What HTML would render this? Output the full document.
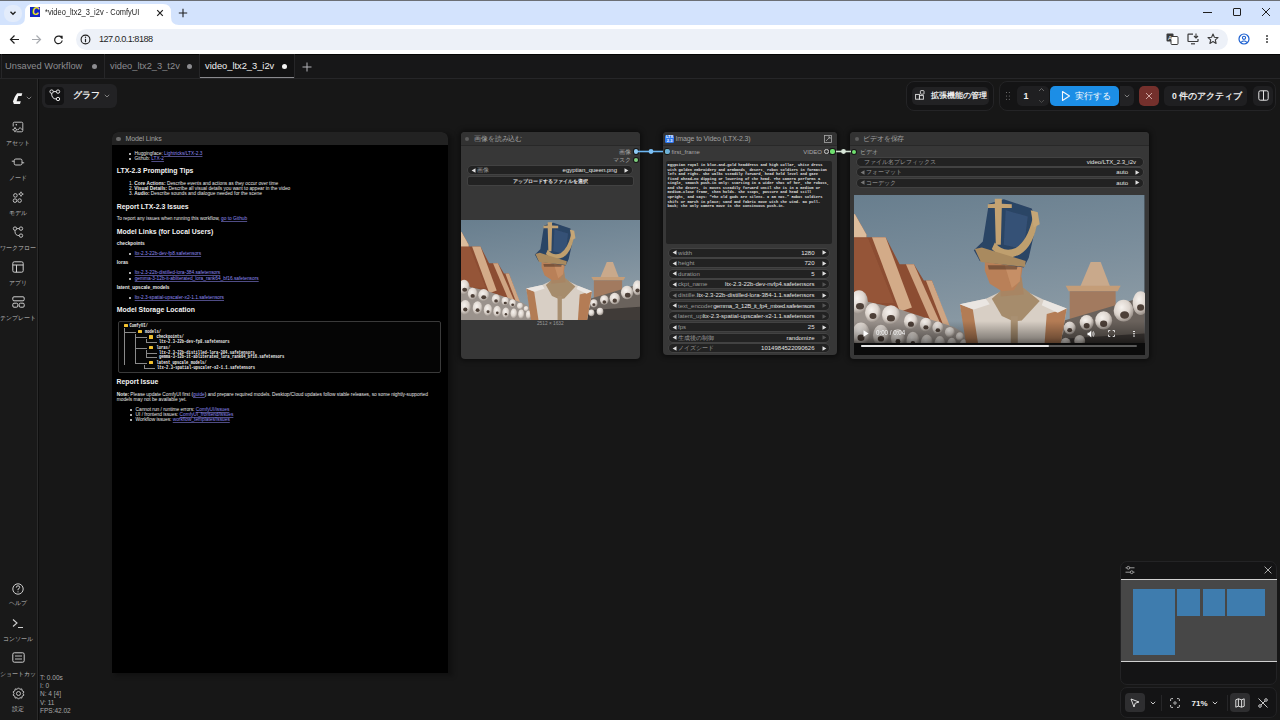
<!DOCTYPE html>
<html><head><meta charset="utf-8">
<style>
*{box-sizing:border-box;margin:0;padding:0}
html,body{width:1280px;height:720px;overflow:hidden;background:#171717;font-family:"Liberation Sans",sans-serif;position:relative}
.a{position:absolute;white-space:nowrap}
svg{display:block;overflow:visible}
.wt{font-size:9.3px;line-height:12px}
.sbl{left:0;width:36px;text-align:center;color:#bdbdbd;font-size:6.3px;line-height:10px;overflow:hidden}
.ntitle{font-size:7px;line-height:11px;color:#a0a0a0;letter-spacing:-0.12px}
.md{font-size:4.8px;line-height:6px;color:#e8e8e8;transform:translateY(-3px)}
.md b{font-weight:bold}
.lk{color:#8f8bf2;text-decoration:underline;text-decoration-thickness:0.4px;text-decoration-color:rgba(143,139,242,.55)}
.h2{font-size:6.9px;line-height:8px;font-weight:bold;color:#f2f2f2;transform:translateY(-4px)}
.code{font-family:"Liberation Mono",monospace;font-size:3.8px;line-height:6px;color:#f2f2f2;font-weight:bold;transform:translateY(-3px) scaleY(1.25)}
.wl{font-size:6px;line-height:8px;color:#9a9a9a}
.wv{font-size:6px;line-height:8px;color:#e2e2e2}
.wb{font-size:5.6px;line-height:8px;color:#e2e2e2;font-weight:bold}
.prompt{font-family:"Liberation Mono",monospace;font-size:3.7px;line-height:4.57px;color:#e0e0e0;font-weight:bold}
</style></head><body>
<!-- browser chrome -->
<div class="a" style="left:0;top:0;width:1280px;height:25px;background:#d3e3fd"></div>
<div class="a" style="left:0;top:0;width:1280px;height:1px;background:#6b6f75"></div>
<div class="a" style="left:4px;top:5px;width:18px;height:17px;border-radius:8px;background:#e3ecfb"></div>
<svg class="a" style="left:9px;top:9px" width="8" height="8" viewBox="0 0 8 8"><path d="M1.5 2.8 L4 5.2 L6.5 2.8" stroke="#1f1f1f" stroke-width="1.4" fill="none"/></svg>
<!-- active tab -->
<svg class="a" style="left:17px;top:4px" width="162" height="21" viewBox="0 0 162 21"><path d="M0 21 Q8 21 8 13 L8 8 Q8 0 16 0 L146 0 Q154 0 154 8 L154 13 Q154 21 162 21 Z" fill="#fff"/></svg>
<div class="a" style="left:30px;top:7px;width:10px;height:10px;background:#1326c4"></div>
<div class="a" style="left:31px;top:6px;width:9px;height:12px;color:#f4e21a;font-weight:bold;font-style:italic;font-size:10px;line-height:12px;text-align:center">C</div>
<div class="a" style="left:45px;top:6px;font-size:8.8px;line-height:12px;color:#1f1f1f;transform:scaleX(0.85);transform-origin:0 0">*video_ltx2_3_i2v - ComfyUI</div>
<svg class="a" style="left:156px;top:9px" width="8" height="8" viewBox="0 0 8 8"><path d="M1.2 1.2 L6.8 6.8 M6.8 1.2 L1.2 6.8" stroke="#1f1f1f" stroke-width="1.2"/></svg>
<svg class="a" style="left:178px;top:8px" width="10" height="10" viewBox="0 0 10 10"><path d="M5 0.8 V9.2 M0.8 5 H9.2" stroke="#1f1f1f" stroke-width="1.1"/></svg>
<!-- window controls -->
<div class="a" style="left:1203px;top:12px;width:9px;height:1px;background:#1f1f1f"></div>
<div class="a" style="left:1233px;top:8px;width:8px;height:8px;border:1px solid #1f1f1f;border-radius:1px"></div>
<svg class="a" style="left:1261px;top:7px" width="10" height="10" viewBox="0 0 10 10"><path d="M1 1 L9 9 M9 1 L1 9" stroke="#1f1f1f" stroke-width="1"/></svg>
<!-- toolbar -->
<div class="a" style="left:0;top:25px;width:1280px;height:29px;background:#fff"></div>
<svg class="a" style="left:9px;top:34px" width="11" height="11" viewBox="0 0 11 11"><path d="M10 5.5 H1.5 M5.5 1.5 L1.5 5.5 L5.5 9.5" stroke="#1f1f1f" stroke-width="1.2" fill="none"/></svg>
<svg class="a" style="left:31px;top:34px" width="11" height="11" viewBox="0 0 11 11"><path d="M1 5.5 H9.5 M5.5 1.5 L9.5 5.5 L5.5 9.5" stroke="#a8abb0" stroke-width="1.2" fill="none"/></svg>
<svg class="a" style="left:53px;top:34px" width="11" height="11" viewBox="0 0 11 11"><path d="M9 4.5 A3.8 3.8 0 1 0 9.2 6.5" stroke="#1f1f1f" stroke-width="1.2" fill="none"/><path d="M6.5 1.8 L9.6 1.8 L9.6 5 Z" fill="#1f1f1f"/></svg>
<div class="a" style="left:76px;top:29px;width:1152px;height:21px;border-radius:11px;background:#edf1f8"></div>
<svg class="a" style="left:80px;top:34px" width="11" height="11" viewBox="0 0 11 11"><circle cx="5.5" cy="5.5" r="4.4" stroke="#1f1f1f" stroke-width="1.1" fill="none"/><path d="M5.5 4.8 V8.2" stroke="#1f1f1f" stroke-width="1.2"/><circle cx="5.5" cy="3.2" r="0.7" fill="#1f1f1f"/></svg>
<div class="a" style="left:99px;top:33px;font-size:9.2px;line-height:12px;color:#1f1f1f;letter-spacing:-0.55px">127.0.0.1:8188</div>
<!-- right toolbar icons -->
<svg class="a" style="left:1166px;top:33px" width="13" height="12" viewBox="0 0 13 12"><rect x="0.5" y="0.5" width="7" height="8" rx="1" fill="#3b3b3b"/><rect x="5" y="3.5" width="7" height="8" rx="1" fill="#fff" stroke="#3b3b3b"/><text x="2" y="7" font-size="6" fill="#fff" font-family="Liberation Sans">A</text></svg>
<svg class="a" style="left:1187px;top:33px" width="13" height="12" viewBox="0 0 13 12"><path d="M6 1.2 H1.5 Q1 1.2 1 1.7 V8 Q1 8.5 1.5 8.5 H10.5 Q11 8.5 11 8 V6" stroke="#3b3b3b" stroke-width="1.2" fill="none"/><path d="M4 10.8 H8" stroke="#3b3b3b" stroke-width="1.2"/><path d="M9 0.5 V4.8 M7 3 L9 5 L11 3" stroke="#3b3b3b" stroke-width="1.1" fill="none"/></svg>
<svg class="a" style="left:1207px;top:33px" width="12" height="12" viewBox="0 0 12 12"><path d="M6 1 L7.4 4.3 L11 4.6 L8.3 6.9 L9.1 10.4 L6 8.6 L2.9 10.4 L3.7 6.9 L1 4.6 L4.6 4.3 Z" stroke="#3b3b3b" stroke-width="1.1" fill="none" stroke-linejoin="round"/></svg>
<svg class="a" style="left:1238px;top:33px" width="12" height="12" viewBox="0 0 12 12"><circle cx="6" cy="6" r="5" stroke="#1a5fd0" stroke-width="1.2" fill="none"/><circle cx="6" cy="4.8" r="1.6" stroke="#1a5fd0" stroke-width="1.1" fill="none"/><path d="M3 9.3 Q6 6.8 9 9.3" stroke="#1a5fd0" stroke-width="1.1" fill="none"/></svg>
<div class="a" style="left:1266px;top:35px;width:2px;height:2px;border-radius:1px;background:#3b3b3b;box-shadow:0 3px 0 #3b3b3b,0 6px 0 #3b3b3b"></div>
<!-- comfy workflow tabs -->
<div class="a" style="left:0;top:54px;width:1280px;height:25px;background:#171718"></div><div class="a" style="left:0;top:54px;width:1280px;height:1.3px;background:#050505"></div>
<div class="a" style="left:0;top:78px;width:1280px;height:1px;background:#262628"></div>
<div class="a" style="left:1px;top:54px;width:1px;height:24px;background:#262628"></div>
<div class="a" style="left:104px;top:54px;width:1px;height:24px;background:#262628"></div>
<div class="a" style="left:199px;top:54px;width:1px;height:24px;background:#262628"></div>
<div class="a" style="left:294px;top:54px;width:1px;height:24px;background:#262628"></div>
<div class="a" style="left:200px;top:54px;width:94px;height:24px;background:#121213"></div>
<div class="a" style="left:200px;top:76.5px;width:94px;height:1.5px;background:#8a8a8e"></div>
<div class="a wt" style="left:5px;top:60px;color:#8c8c90">Unsaved Workflow</div>
<div class="a" style="left:92px;top:64px;width:5px;height:5px;border-radius:50%;background:#8c8c90"></div>
<div class="a wt" style="left:110px;top:60px;color:#8c8c90">video_ltx2_3_t2v</div>
<div class="a" style="left:187px;top:64px;width:5px;height:5px;border-radius:50%;background:#8c8c90"></div>
<div class="a wt" style="left:205px;top:60px;color:#f0f0f0">video_ltx2_3_i2v</div>
<div class="a" style="left:282px;top:64px;width:5px;height:5px;border-radius:50%;background:#f4f4f4"></div>
<svg class="a" style="left:301.5px;top:61.5px" width="10" height="10" viewBox="0 0 10 10"><path d="M5 0.5 V9.5 M0.5 5 H9.5" stroke="#b4b4b8" stroke-width="1"/></svg>
<!-- sidebar -->
<div class="a" style="left:0;top:79px;width:36.5px;height:641px;background:#191919"></div>
<div class="a" style="left:36.5px;top:79px;width:1px;height:641px;background:#2b2b2b"></div>
<div class="a" style="left:37.5px;top:79px;width:1px;height:641px;background:#0e0e0e"></div>
<!-- logo -->
<svg class="a" style="left:12px;top:92px" width="12" height="13" viewBox="0 0 12 13"><path d="M5.2 1.2 L10.3 1.2 L9.5 3.9 L6.3 3.9 L4.6 9.3 L8.8 9.3 L8 11.9 L1.8 11.9 L1.3 10.2 L0.9 9.6 L2.6 5.2 L3.6 3.6 Z" fill="#f2f2f2"/></svg>
<svg class="a" style="left:25.5px;top:96px" width="6" height="4" viewBox="0 0 6 4"><path d="M0.8 0.8 L3 3 L5.2 0.8" stroke="#8a8a8a" stroke-width="0.9" fill="none"/></svg>
<!-- graph button -->
<div class="a" style="left:42px;top:83.5px;width:74.5px;height:24.5px;border-radius:6px;background:#222224"></div>
<div class="a" style="left:45px;top:86.5px;width:19px;height:18.5px;border-radius:4px;background:#131314"></div>
<svg class="a" style="left:48.5px;top:89px" width="12" height="13" viewBox="0 0 12 13"><circle cx="2.6" cy="2.6" r="1.7" stroke="#e6e6e6" stroke-width="1" fill="none"/><circle cx="9" cy="2.6" r="1.7" stroke="#e6e6e6" stroke-width="1" fill="none"/><circle cx="9" cy="10" r="1.7" stroke="#e6e6e6" stroke-width="1" fill="none"/><path d="M4.3 2.6 H7.3 M2.6 4.3 Q2.6 10 7.3 10" stroke="#e6e6e6" stroke-width="1" fill="none"/></svg>
<div class="a" style="left:73px;top:90px;font-size:9px;line-height:11px;font-weight:bold;color:#f0f0f0">グラフ</div>
<svg class="a" style="left:104px;top:94px" width="6" height="4" viewBox="0 0 6 4"><path d="M0.8 0.8 L3 3 L5.2 0.8" stroke="#8a8a8a" stroke-width="0.9" fill="none"/></svg>
<!-- right toolbar -->
<div class="a" style="left:905.5px;top:81px;width:88.5px;height:30px;border-radius:8px;background:#141415;border:1px solid #242426"></div>
<div class="a" style="left:911.5px;top:86.5px;width:77.5px;height:18.5px;border-radius:5px;background:#222224"></div>
<svg class="a" style="left:915px;top:90px" width="10" height="10" viewBox="0 0 10 10"><rect x="0.6" y="4.4" width="3.8" height="4.8" stroke="#e0e0e0" stroke-width="0.9" fill="none"/><rect x="4.4" y="5.6" width="4" height="3.6" stroke="#e0e0e0" stroke-width="0.9" fill="none"/><rect x="5.4" y="0.6" width="3.6" height="3.6" rx="0.6" stroke="#e0e0e0" stroke-width="0.9" fill="none"/></svg>
<div class="a" style="left:930.5px;top:89.5px;font-size:7.5px;line-height:12px;font-weight:bold;color:#ececec">拡張機能の管理</div>
<div class="a" style="left:998.5px;top:81px;width:277px;height:30px;border-radius:8px;background:#141415;border:1px solid #242426"></div>
<div class="a" style="left:1005.5px;top:91.5px;width:1.3px;height:1.3px;border-radius:50%;background:#888;box-shadow:2.8px 0 #888,0 3.4px #888,2.8px 3.4px #888,0 6.8px #888,2.8px 6.8px #888"></div>
<div class="a" style="left:1016.5px;top:86px;width:32px;height:19.5px;border-radius:5px;background:#1f1f21"></div>
<div class="a" style="left:1023.5px;top:90px;font-size:9px;line-height:12px;font-weight:bold;color:#eee">1</div>
<svg class="a" style="left:1038px;top:87px" width="7" height="17" viewBox="0 0 7 17"><path d="M1 4 L3.5 1.5 L6 4" stroke="#777" stroke-width="0.8" fill="none"/><path d="M1 13 L3.5 15.5 L6 13" stroke="#555" stroke-width="0.8" fill="none"/></svg>
<div class="a" style="left:1050.3px;top:86px;width:68.5px;height:20px;border-radius:5px;background:#1c8ee6"></div>
<svg class="a" style="left:1061px;top:90px" width="10" height="12" viewBox="0 0 10 12"><path d="M1.5 1.5 L8.5 6 L1.5 10.5 Z" stroke="#f4f8fc" stroke-width="1.1" fill="none" stroke-linejoin="round"/></svg>
<div class="a" style="left:1075px;top:90px;font-size:8.5px;line-height:12px;color:#f4f8fc">実行する</div>
<div class="a" style="left:1119.7px;top:86px;width:14px;height:20px;border-radius:0 5px 5px 0;background:#222224"></div>
<svg class="a" style="left:1123.5px;top:94px" width="6" height="4" viewBox="0 0 6 4"><path d="M0.8 0.8 L3 3 L5.2 0.8" stroke="#888" stroke-width="0.9" fill="none"/></svg>
<div class="a" style="left:1139px;top:86px;width:20px;height:20px;border-radius:5px;background:#74302c"></div>
<svg class="a" style="left:1145px;top:92px" width="8" height="8" viewBox="0 0 8 8"><path d="M1 1 L7 7 M7 1 L1 7" stroke="#d9b3b0" stroke-width="0.9"/></svg>
<div class="a" style="left:1164px;top:86px;width:83px;height:20px;border-radius:5px;background:#1f1f21"></div>
<div class="a" style="left:1172px;top:90px;font-size:8.6px;line-height:12px;font-weight:bold;color:#eee">0 件のアクティブ</div>
<div class="a" style="left:1253px;top:86px;width:19.5px;height:20px;border-radius:5px;background:#1f1f21"></div>
<svg class="a" style="left:1257.5px;top:90px" width="11" height="11" viewBox="0 0 11 11"><rect x="0.8" y="0.8" width="9.4" height="9.4" rx="1.5" stroke="#e6e6e6" stroke-width="1" fill="none"/><path d="M5.5 0.8 V10.2" stroke="#e6e6e6" stroke-width="1"/></svg>
<!-- sidebar icons -->
<svg class="a" style="left:12px;top:121px" width="12" height="12" viewBox="0 0 12 12"><path d="M4.5 10.8 H9.5 Q10.8 10.8 10.8 9.5 V2.5 Q10.8 1.2 9.5 1.2 H2.5 Q1.2 1.2 1.2 2.5 V5.5" stroke="#cfcfcf" stroke-width="0.9" fill="none"/><path d="M3 6.3 L3.7 8 L5.4 8.7 L3.7 9.4 L3 11.1 L2.3 9.4 L0.6 8.7 L2.3 8 Z" stroke="#cfcfcf" stroke-width="0.8" fill="none" stroke-linejoin="round"/><path d="M6 9 L8 6.5 L10.5 9" stroke="#cfcfcf" stroke-width="0.8" fill="none"/><circle cx="4.3" cy="3.8" r="0.8" fill="#cfcfcf"/></svg>
<div class="a sbl" style="top:138px">アセット</div>
<svg class="a" style="left:11px;top:157px" width="14" height="10" viewBox="0 0 14 10"><rect x="3.2" y="2" width="7.8" height="6" rx="1.6" stroke="#cfcfcf" stroke-width="0.95" fill="none"/><path d="M0.8 4.2 H3.2 M11 5.8 H13.2" stroke="#cfcfcf" stroke-width="0.95"/></svg>
<div class="a sbl" style="top:173px">ノード</div>
<svg class="a" style="left:12px;top:191px" width="12" height="12" viewBox="0 0 12 12"><circle cx="3.4" cy="4.4" r="1.8" stroke="#cfcfcf" stroke-width="0.9" fill="none"/><circle cx="3" cy="9.6" r="1.8" stroke="#cfcfcf" stroke-width="0.9" fill="none"/><circle cx="7.6" cy="9.6" r="1.8" stroke="#cfcfcf" stroke-width="0.9" fill="none"/><path d="M9 0.8 L9.7 2.4 L11.3 3.1 L9.7 3.8 L9 5.4 L8.3 3.8 L6.7 3.1 L8.3 2.4 Z" stroke="#cfcfcf" stroke-width="0.8" fill="none" stroke-linejoin="round"/></svg>
<div class="a sbl" style="top:208px">モデル</div>
<svg class="a" style="left:12px;top:226px" width="12" height="13" viewBox="0 0 12 13"><circle cx="3" cy="2.6" r="1.7" stroke="#cfcfcf" stroke-width="0.9" fill="none"/><circle cx="9" cy="2.6" r="1.7" stroke="#cfcfcf" stroke-width="0.9" fill="none"/><circle cx="9" cy="9.6" r="1.7" stroke="#cfcfcf" stroke-width="0.9" fill="none"/><path d="M4.7 2.6 H7.3 M3 4.3 V5.5 Q3 9.6 7.3 9.6" stroke="#cfcfcf" stroke-width="0.9" fill="none"/></svg>
<div class="a sbl" style="top:243px">ワークフロー</div>
<svg class="a" style="left:12px;top:261px" width="12" height="12" viewBox="0 0 12 12"><rect x="0.8" y="0.8" width="10.4" height="10.4" rx="1.5" stroke="#cfcfcf" stroke-width="1" fill="none"/><path d="M0.8 4 H11.2 M4.5 4 V11.2" stroke="#cfcfcf" stroke-width="1"/></svg>
<div class="a sbl" style="top:278px">アプリ</div>
<svg class="a" style="left:11.5px;top:296px" width="13" height="12" viewBox="0 0 13 12"><rect x="0.8" y="0.8" width="11.4" height="4" rx="1.2" stroke="#cfcfcf" stroke-width="1" fill="none"/><rect x="0.8" y="7.2" width="5" height="4" rx="1.2" stroke="#cfcfcf" stroke-width="1" fill="none"/><rect x="7.2" y="7.2" width="5" height="4" rx="1.2" stroke="#cfcfcf" stroke-width="1" fill="none"/></svg>
<div class="a sbl" style="top:313px">テンプレート</div>
<svg class="a" style="left:12px;top:583px" width="12" height="12" viewBox="0 0 12 12"><circle cx="6" cy="6" r="5.2" stroke="#cfcfcf" stroke-width="1" fill="none"/><path d="M4.3 4.6 Q4.3 2.8 6 2.8 Q7.7 2.8 7.7 4.4 Q7.7 5.5 6 6.2 V7.2" stroke="#cfcfcf" stroke-width="1" fill="none"/><circle cx="6" cy="8.8" r="0.6" fill="#cfcfcf"/></svg>
<div class="a sbl" style="top:598px">ヘルプ</div>
<svg class="a" style="left:12px;top:618px" width="12" height="11" viewBox="0 0 12 11"><path d="M1 1.5 L5 5 L1 8.5 M6 9.5 H11" stroke="#cfcfcf" stroke-width="1.1" fill="none"/></svg>
<div class="a sbl" style="top:634px">コンソール</div>
<svg class="a" style="left:11.5px;top:652px" width="13" height="11" viewBox="0 0 13 11"><rect x="0.8" y="0.8" width="11.4" height="9.4" rx="1.5" stroke="#cfcfcf" stroke-width="1" fill="none"/><path d="M3 4 H10 M3 7 H10" stroke="#cfcfcf" stroke-width="0.9"/></svg>
<div class="a sbl" style="top:669px">ショートカット</div>
<svg class="a" style="left:11.5px;top:686.5px" width="13" height="13" viewBox="0 0 13 13"><path d="M6.5 0.8 L7.8 2.3 L9.8 1.9 L10.2 3.9 L12 4.9 L11 6.5 L12 8.1 L10.2 9.1 L9.8 11.1 L7.8 10.7 L6.5 12.2 L5.2 10.7 L3.2 11.1 L2.8 9.1 L1 8.1 L2 6.5 L1 4.9 L2.8 3.9 L3.2 1.9 L5.2 2.3 Z" stroke="#cfcfcf" stroke-width="0.9" fill="none" stroke-linejoin="round"/><circle cx="6.5" cy="6.5" r="2" stroke="#cfcfcf" stroke-width="0.9" fill="none"/></svg>
<div class="a sbl" style="top:704px">設定</div>
<!-- stats -->
<div class="a" style="left:40px;top:674px;font-size:6.5px;line-height:8.2px;color:#a8a8a8">T: 0.00s<br>I: 0<br>N: 4 [4]<br>V: 11<br>FPS:42.02</div>
<div class="a" style="left:112px;top:132px;width:336px;height:541px;border-radius:6px 6px 0 0;background:#000;box-shadow:4px 2px 5px 1px rgba(0,0,0,.3)"></div>
<div class="a" style="left:112px;top:132px;width:336px;height:13px;border-radius:6px 6px 0 0;background:#222222"></div>
<div class="a" style="left:116.3px;top:136.5px;width:4.5px;height:4.5px;border-radius:50%;background:#6a6a6a"></div>
<div class="a ntitle" style="left:125.5px;top:133px">Model Links</div>
<div class="a" style="left:128.6px;top:152.8px;width:2px;height:2px;border-radius:50%;background:#e6e6e6"></div>
<div class="a md" style="left:134.5px;top:153.8px;">Huggingface: <span class="lk">Lightricks/LTX-2.3</span></div>
<div class="a" style="left:128.6px;top:157.6px;width:2px;height:2px;border-radius:50%;background:#e6e6e6"></div>
<div class="a md" style="left:134.5px;top:158.6px;">Github: <span class="lk">LTX-2</span></div>
<div class="a h2" style="left:116.75px;top:171.4px;">LTX-2.3 Prompting Tips</div>
<div class="a md" style="left:129px;top:183.8px;">1. <b>Core Actions:</b> Describe events and actions as they occur over time</div>
<div class="a md" style="left:129px;top:188.8px;">2. <b>Visual Details:</b> Describe all visual details you want to appear in the video</div>
<div class="a md" style="left:129px;top:194px;">3. <b>Audio:</b> Describe sounds and dialogue needed for the scene</div>
<div class="a h2" style="left:116.75px;top:206.6px;">Report LTX-2.3 Issues</div>
<div class="a md" style="left:116.75px;top:218.5px;">To report any issues when running this workflow, <span class="lk">go to Github</span></div>
<div class="a h2" style="left:116.75px;top:231.6px;">Model Links (for Local Users)</div>
<div class="a md" style="left:116.75px;top:243.6px;"><b>checkpoints</b></div>
<div class="a" style="left:128.6px;top:253px;width:2px;height:2px;border-radius:50%;background:#e6e6e6"></div>
<div class="a md" style="left:134.7px;top:254px;"><span class="lk">ltx-2.3-22b-dev-fp8.safetensors</span></div>
<div class="a md" style="left:116.75px;top:263.3px;"><b>loras</b></div>
<div class="a" style="left:128.6px;top:272px;width:2px;height:2px;border-radius:50%;background:#e6e6e6"></div>
<div class="a md" style="left:134.7px;top:273px;"><span class="lk">ltx-2.3-22b-distilled-lora-384.safetensors</span></div>
<div class="a" style="left:128.6px;top:277.7px;width:2px;height:2px;border-radius:50%;background:#e6e6e6"></div>
<div class="a md" style="left:134.7px;top:278.7px;"><span class="lk">gemma-3-12b-it-abliterated_lora_rank64_bf16.safetensors</span></div>
<div class="a md" style="left:116.75px;top:288.3px;"><b>latent_upscale_models</b></div>
<div class="a" style="left:128.6px;top:297.3px;width:2px;height:2px;border-radius:50%;background:#e6e6e6"></div>
<div class="a md" style="left:134.7px;top:298.3px;"><span class="lk">ltx-2.3-spatial-upscaler-x2-1.1.safetensors</span></div>
<div class="a h2" style="left:116.75px;top:310.3px;">Model Storage Location</div>
<div class="a" style="left:118.3px;top:320.6px;width:322.7px;height:52.2px;border:1px solid #3a3a3a;border-radius:2px;background:#050505"></div>
<div class="a code" style="left:129.5px;top:325.5px;">ComfyUI/</div>
<div class="a code" style="left:145px;top:331.5px;">models/</div>
<div class="a code" style="left:156.5px;top:337px;">checkpoints/</div>
<div class="a code" style="left:159px;top:342px;">ltx-2.3-22b-dev-fp8.safetensors</div>
<div class="a code" style="left:156.5px;top:347.5px;">loras/</div>
<div class="a code" style="left:159px;top:352.5px;">ltx-2.3-22b-distilled-lora-384.safetensors</div>
<div class="a code" style="left:159px;top:357.2px;">gemma-3-12b-it-abliterated_lora_rank64_bf16.safetensors</div>
<div class="a code" style="left:156.5px;top:362.5px;">latent_upscale_models/</div>
<div class="a code" style="left:157px;top:368px;">ltx-2.3-spatial-upscaler-x2-1.1.safetensors</div>
<div class="a" style="left:123.5px;top:323.9px;width:4px;height:3.2px;background:#f2c230;border-radius:0.5px"></div>
<div class="a" style="left:138px;top:329.9px;width:4px;height:3.2px;background:#f2c230;border-radius:0.5px"></div>
<div class="a" style="left:149px;top:335.4px;width:4px;height:3.2px;background:#f2c230;border-radius:0.5px"></div>
<div class="a" style="left:149px;top:345.9px;width:4px;height:3.2px;background:#f2c230;border-radius:0.5px"></div>
<div class="a" style="left:149px;top:360.9px;width:4px;height:3.2px;background:#f2c230;border-radius:0.5px"></div>
<div class="a" style="left:123.5px;top:327.5px;width:0.7px;height:37px;background:#8a8a8a"></div>
<div class="a" style="left:123.5px;top:331.5px;width:12px;height:0.7px;background:#8a8a8a"></div>
<div class="a" style="left:134.5px;top:333.5px;width:0.7px;height:29px;background:#8a8a8a"></div>
<div class="a" style="left:134.5px;top:337px;width:12px;height:0.7px;background:#8a8a8a"></div>
<div class="a" style="left:146px;top:339px;width:0.7px;height:3px;background:#8a8a8a"></div>
<div class="a" style="left:146px;top:342px;width:11px;height:0.7px;background:#8a8a8a"></div>
<div class="a" style="left:134.5px;top:347.5px;width:12px;height:0.7px;background:#8a8a8a"></div>
<div class="a" style="left:146px;top:349.5px;width:0.7px;height:8px;background:#8a8a8a"></div>
<div class="a" style="left:146px;top:352.5px;width:11px;height:0.7px;background:#8a8a8a"></div>
<div class="a" style="left:146px;top:357.2px;width:11px;height:0.7px;background:#8a8a8a"></div>
<div class="a" style="left:134.5px;top:362.5px;width:12px;height:0.7px;background:#8a8a8a"></div>
<div class="a" style="left:144px;top:364.5px;width:0.7px;height:3.5px;background:#8a8a8a"></div>
<div class="a" style="left:144px;top:368px;width:11px;height:0.7px;background:#8a8a8a"></div>
<div class="a h2" style="left:116.5px;top:382px;">Report Issue</div>
<div class="a md" style="left:116.75px;top:394.5px;"><b>Note:</b> Please update ComfyUI first (<span class="lk">guide</span>) and prepare required models. Desktop/Cloud updates follow stable releases, so some nightly-supported</div>
<div class="a md" style="left:116.75px;top:399.8px;">models may not be available yet.</div>
<div class="a" style="left:129.8px;top:409.2px;width:2px;height:2px;border-radius:50%;background:#e6e6e6"></div>
<div class="a md" style="left:135.5px;top:410.2px;">Cannot run / runtime errors: <span class="lk">ComfyUI/issues</span></div>
<div class="a" style="left:129.8px;top:414.2px;width:2px;height:2px;border-radius:50%;background:#e6e6e6"></div>
<div class="a md" style="left:135.5px;top:415.2px;">UI / frontend issues: <span class="lk">ComfyUI_frontend/issues</span></div>
<div class="a" style="left:129.8px;top:419.2px;width:2px;height:2px;border-radius:50%;background:#e6e6e6"></div>
<div class="a md" style="left:135.5px;top:420.2px;">Workflow issues: <span class="lk">workflow_templates/issues</span></div>
<div class="a" style="left:460.8px;top:132.3px;width:179px;height:226.7px;border-radius:4px;background:#373737;box-shadow:0 0 5px 2px rgba(0,0,0,.45)"></div>
<div class="a" style="left:460.8px;top:132.3px;width:179px;height:13px;border-radius:4px 4px 0 0;background:#323232"></div>
<div class="a" style="left:460.8px;top:145.3px;width:179px;height:0.7px;background:#282828"></div>
<div class="a" style="left:464.5px;top:136.6px;width:4.5px;height:4.5px;border-radius:50%;background:#5c5c5c"></div>
<div class="a ntitle" style="left:474px;top:133px">画像を読み込む</div>
<div class="a wl" style="right:649.5px;top:147.5px;color:#a8a8a8">画像</div>
<div class="a wl" style="right:649.5px;top:156.2px;color:#a8a8a8">マスク</div>
<div class="a" style="left:633.5px;top:149.4px;width:4.2px;height:4.2px;border-radius:50%;background:#8fcaf5;box-shadow:0 0 0 1px rgba(0,0,0,.6)"></div>
<div class="a" style="left:633.5px;top:158.1px;width:4.2px;height:4.2px;border-radius:50%;background:#7fd07f;box-shadow:0 0 0 1px rgba(0,0,0,.6)"></div>
<div class="a" style="left:467.5px;top:166.2px;width:164.5px;height:8px;border-radius:4.0px;background:#222222;box-shadow:0 0 0 0.7px #474747"></div>
<svg class="a" style="left:470.5px;top:167.7px" width="5" height="5" viewBox="0 0 5 5"><path d="M4.5 0.3 L0.6 2.5 L4.5 4.7 Z" fill="#dedede"/></svg>
<svg class="a" style="left:624.0px;top:167.7px" width="5" height="5" viewBox="0 0 5 5"><path d="M0.5 0.3 L4.4 2.5 L0.5 4.7 Z" fill="#dedede"/></svg>
<div class="a wl" style="left:476.5px;top:166.2px">画像</div>
<div class="a wv" style="right:663.0px;top:166.2px">egyptian_queen.png</div>
<div class="a" style="left:467.5px;top:177px;width:165px;height:7.6px;border-radius:1.5px;background:#222222;box-shadow:0 0 0 0.7px #474747"></div>
<div class="a wb" style="left:467.5px;width:165px;top:176.8px;text-align:center;font-size:5.1px">アップロードするファイルを選択</div>
<div class="a" style="left:460.8px;top:219.7px;width:179px;height:100.3px;overflow:hidden"><svg width="100%" height="100%" viewBox="0 0 291 148" preserveAspectRatio="none" style="display:block">
<defs>
<linearGradient id="skyi1" x1="0" y1="0" x2="0.25" y2="1"><stop offset="0" stop-color="#687e8e"/><stop offset="0.5" stop-color="#7a8d9b"/><stop offset="1" stop-color="#909ea7"/></linearGradient>
<linearGradient id="sandi1" x1="0" y1="0" x2="1" y2="0.3"><stop offset="0" stop-color="#b47b55"/><stop offset="1" stop-color="#c48d60"/></linearGradient>
<radialGradient id="ski1" cx="0.4" cy="0.35" r="0.65"><stop offset="0" stop-color="#f6f2ee"/><stop offset="0.6" stop-color="#ddd5ce"/><stop offset="1" stop-color="#9a918a"/></radialGradient>
<filter id="bli1" x="-5%" y="-5%" width="110%" height="110%"><feGaussianBlur stdDeviation="0.7"/></filter>
</defs>
<rect width="291" height="148" fill="url(#skyi1)"/>
<g filter="url(#bli1)">
<!-- left stepped pyramid -->
<path d="M-2 17 L1 17.7 L12.5 36.5 L12.5 39 L31.7 39 L45.7 64 L60 64 L70 79 L78 79 L98.4 129 L98.4 148 L-2 148 Z" fill="#8c4d32"/>
<path d="M-2 17 L1 17.7 L12.5 36.5 L12.5 39 L0 39 L-2 36 Z" fill="#dcbc9c"/>
<path d="M18 39 L31.7 39 L58 104 L46 108 Z" fill="#d3ab88"/>
<path d="M52 64 L60 64 L86 118 L78 119 Z" fill="#cfa583"/>
<path d="M72 79 L78 79 L98.4 127 L93 129 Z" fill="#cfa583"/>
<path d="M0 40 L14 40 L40 100 L0 100 Z" fill="#98583a" opacity=".7"/>
<!-- right tower -->
<path d="M237 62 L247 62 L257 86 L226 86 Z" fill="#c9a98b"/>
<path d="M212 84 L267 84 L264 89 L215 89 Z" fill="#c49d78"/>
<rect x="216" y="89" width="46" height="32" fill="#a27a5e"/>
<!-- left skulls -->
<path d="M0 96 L40 104 L100 122 L118 132 L118 148 L0 148 Z" fill="#9a928c"/>
<g fill="url(#ski1)">
<ellipse cx="5" cy="99" rx="9" ry="11"/><ellipse cx="19" cy="109" rx="8" ry="9"/><ellipse cx="37" cy="111" rx="9" ry="9"/>
<ellipse cx="57" cy="117" rx="7" ry="7.5"/><ellipse cx="72" cy="120" rx="6" ry="6.5"/><ellipse cx="84" cy="123" rx="5.5" ry="6"/><ellipse cx="96" cy="127" rx="5" ry="5"/><ellipse cx="106" cy="131" rx="4" ry="4"/>
<ellipse cx="7" cy="129" rx="9" ry="11"/><ellipse cx="27" cy="130" rx="8" ry="10"/><ellipse cx="44" cy="133" rx="7" ry="9"/><ellipse cx="59" cy="135" rx="6.5" ry="8.5"/><ellipse cx="73" cy="137" rx="6" ry="8"/><ellipse cx="86" cy="138" rx="5.5" ry="7.5"/><ellipse cx="98" cy="139" rx="5" ry="7"/><ellipse cx="110" cy="140" rx="4.5" ry="6.5"/>
</g>
<g fill="#4e4038">
<ellipse cx="6" cy="103" rx="4" ry="3"/><ellipse cx="19" cy="112" rx="3.5" ry="2.8"/><ellipse cx="37" cy="114" rx="4" ry="3"/><ellipse cx="57" cy="119.5" rx="3" ry="2.4"/><ellipse cx="72" cy="122.5" rx="2.6" ry="2"/><ellipse cx="84" cy="125" rx="2.3" ry="1.8"/>
<ellipse cx="7" cy="132" rx="3.5" ry="3"/><ellipse cx="27" cy="133" rx="3.2" ry="2.6"/><ellipse cx="44" cy="135.5" rx="2.5" ry="2.2"/><ellipse cx="59" cy="137" rx="2.2" ry="2"/><ellipse cx="73" cy="139" rx="2" ry="1.8"/>
</g>
<!-- right skulls -->
<path d="M196 120 L240 108 L291 94 L291 148 L196 148 Z" fill="#6a625c"/>
<path d="M196 134 L291 128 L291 148 L196 148 Z" fill="#3f3a37"/>
<g fill="url(#ski1)">
<ellipse cx="205" cy="126" rx="5" ry="5"/><ellipse cx="216" cy="123" rx="6" ry="6"/><ellipse cx="233" cy="118" rx="7" ry="7"/><ellipse cx="250" cy="116" rx="8.5" ry="8.5"/><ellipse cx="270" cy="107" rx="10" ry="10"/><ellipse cx="287" cy="100" rx="8" ry="11"/>
<ellipse cx="212" cy="137" rx="5" ry="5"/><ellipse cx="226" cy="135" rx="5.5" ry="5.5"/>
</g>
<g fill="#4e4038"><ellipse cx="233" cy="121" rx="3" ry="2.5"/><ellipse cx="250" cy="119" rx="3.6" ry="3"/><ellipse cx="271" cy="111" rx="4.5" ry="3.5"/><ellipse cx="287" cy="104" rx="3.5" ry="3"/><ellipse cx="216" cy="125" rx="2.5" ry="2"/></g>
<!-- dress -->
<path d="M106 101 L132 96 L150 88 L170 88 L190 97 L213 105 L205 148 L116 148 Z" fill="#d8cfc5"/>
<path d="M106 101 L119 106 L126 148 L114 148 Z" fill="#b27b55"/>
<path d="M193 110 L213 105 L205 148 L190 148 Z" fill="#b47c54"/>
<path d="M106 101 L132 96 L136 101 L120 106 Z" fill="#eae6e2"/>
<path d="M190 97 L213 105 L204 109 L188 102 Z" fill="#eae6e2"/>
<path d="M138 96 L150 86 L170 86 L186 98 L168 116 L160 117 L148 112 Z" fill="#a68c6c"/>
<rect x="157" y="112" width="7" height="36" fill="#a99072"/>
<!-- neck/face -->
<path d="M146 78 L168 76 L170 92 L147 94 Z" fill="#a88564"/>
<path d="M131 58 L170 60 L167 78 L160 88 L148 89 L136 82 L131 70 Z" fill="#b98058"/>
<path d="M150 62 L168 62 L166 80 L158 86 Z" fill="#cf9a70" opacity=".6"/>
<path d="M134 65 L164 65 L163 69 L135 69 Z" fill="#4a3224" opacity=".55"/>
<!-- crown -->
<path d="M135 8 L150 4 L178 12.5 L183 25 L175 58 L170 67 L126 61 L120 51 L129 43 Z" fill="#2c4465"/>
<path d="M152 14 L174 20 L170 50 L150 46 Z" fill="#38557a" opacity=".8"/>
<path d="M141 3.5 L148 3.5 L148 8 L158 8.5 L158 12 L148 12 L147 46 L142 46 L141 12 L134 12 L134 8.5 L141 8 Z" fill="#c3a272"/>
<path d="M141 44 Q150 54 162 49 Q174 42 179 21 L184 23 Q180 48 166 55 Q150 62 138 50 Z" fill="#bf9f6e"/>
<path d="M177 14 L184 16 L186 27 L180 30 Z" fill="#c6a676"/>
<path d="M121 50 L128 48.5 L172 61 L171 66.5 L127 62 Z" fill="#a98a5e"/>
</g>
</svg>
</div>
<div class="a" style="left:460.8px;top:320.5px;width:179px;text-align:center;font-size:4.8px;line-height:6px;color:#9a9a9a">2512 × 1632</div>
<div class="a" style="left:663px;top:132.3px;width:173.5px;height:222.7px;border-radius:4px;background:#373737;box-shadow:0 0 5px 2px rgba(0,0,0,.45)"></div>
<div class="a" style="left:663px;top:132.3px;width:173.5px;height:13px;border-radius:4px 4px 0 0;background:#323232"></div>
<div class="a" style="left:663px;top:145.3px;width:173.5px;height:0.7px;background:#282828"></div>
<div class="a" style="left:664.7px;top:134.6px;width:9.8px;height:8.6px;border-radius:1.5px;background:#2f78ee"></div>
<div class="a" style="left:665.5px;top:135px;width:8.2px;font-size:4px;line-height:4px;color:#fff;font-weight:bold;text-align:center">LTX<br>2.3</div>
<div class="a ntitle" style="left:675.5px;top:133px">Image to Video (LTX-2.3)</div>
<svg class="a" style="left:824px;top:134.5px" width="8" height="8" viewBox="0 0 8 8"><rect x="0.5" y="0.5" width="7" height="7" stroke="#aaa" stroke-width="0.8" fill="none"/><path d="M2 6 L6 2 M4 2 H6 V4" stroke="#aaa" stroke-width="0.8" fill="none"/></svg>
<div class="a" style="left:664.9px;top:149.4px;width:4.2px;height:4.2px;border-radius:50%;background:#7fd07f;box-shadow:0 0 0 1px rgba(0,0,0,.6)"></div>
<div class="a" style="left:665px;top:149.2px;width:4.6px;height:4.6px;border-radius:50%;background:#6dafd8"></div>
<div class="a wl" style="left:671.5px;top:147.5px;color:#a8a8a8">first_frame</div>
<div class="a wl" style="right:458px;top:147.5px;color:#a8a8a8">VIDEO</div>
<div class="a" style="left:824px;top:149.2px;width:4.6px;height:4.6px;border-radius:50%;border:0.8px solid #ccc"></div>
<div class="a" style="left:830.4px;top:149.4px;width:4.2px;height:4.2px;border-radius:50%;background:#6fe06f;box-shadow:0 0 0 1px rgba(0,0,0,.6)"></div>
<div class="a" style="left:666.3px;top:161.3px;width:166px;height:82.3px;border-radius:2px;background:#222222"></div>
<div class="a prompt" style="left:667.5px;top:163px">Egyptian royal in blue-and-gold headdress and high collar, white dress<br>with golden embroidery and armbands, desert, robot soldiers in formation<br>left and right. She walks steadily forward, head held level and gaze<br>fixed ahead—no dipping or lowering of the head. The camera performs a<br>single, smooth push-in only: starting in a wider shot of her, the robots,<br>and the desert, it moves steadily forward until she is in a medium or<br>medium-close frame, then holds. She stops, posture and head still<br>upright, and says: “The old gods are silent. I am not.” Robot soldiers<br>shift or march in place; sand and fabric move with the wind. No pull-<br>back; the only camera move is the continuous push-in.</div>
<div class="a" style="left:669.1px;top:248.6px;width:160.4px;height:8px;border-radius:4.0px;background:#222222;box-shadow:0 0 0 0.7px #474747"></div>
<svg class="a" style="left:672.1px;top:250.1px" width="5" height="5" viewBox="0 0 5 5"><path d="M4.5 0.3 L0.6 2.5 L4.5 4.7 Z" fill="#dedede"/></svg>
<svg class="a" style="left:821.5px;top:250.1px" width="5" height="5" viewBox="0 0 5 5"><path d="M0.5 0.3 L4.4 2.5 L0.5 4.7 Z" fill="#dedede"/></svg>
<div class="a wl" style="left:678.1px;top:248.6px">width</div>
<div class="a wv" style="right:465.5px;top:248.6px">1280</div>
<div class="a" style="left:669.1px;top:259.23px;width:160.4px;height:8px;border-radius:4.0px;background:#222222;box-shadow:0 0 0 0.7px #474747"></div>
<svg class="a" style="left:672.1px;top:260.73px" width="5" height="5" viewBox="0 0 5 5"><path d="M4.5 0.3 L0.6 2.5 L4.5 4.7 Z" fill="#dedede"/></svg>
<svg class="a" style="left:821.5px;top:260.73px" width="5" height="5" viewBox="0 0 5 5"><path d="M0.5 0.3 L4.4 2.5 L0.5 4.7 Z" fill="#dedede"/></svg>
<div class="a wl" style="left:678.1px;top:259.23px">height</div>
<div class="a wv" style="right:465.5px;top:259.23px">720</div>
<div class="a" style="left:669.1px;top:269.86px;width:160.4px;height:8px;border-radius:4.0px;background:#222222;box-shadow:0 0 0 0.7px #474747"></div>
<svg class="a" style="left:672.1px;top:271.36px" width="5" height="5" viewBox="0 0 5 5"><path d="M4.5 0.3 L0.6 2.5 L4.5 4.7 Z" fill="#dedede"/></svg>
<svg class="a" style="left:821.5px;top:271.36px" width="5" height="5" viewBox="0 0 5 5"><path d="M0.5 0.3 L4.4 2.5 L0.5 4.7 Z" fill="#dedede"/></svg>
<div class="a wl" style="left:678.1px;top:269.86px">duration</div>
<div class="a wv" style="right:465.5px;top:269.86px">5</div>
<div class="a" style="left:669.1px;top:280.49px;width:160.4px;height:8px;border-radius:4.0px;background:#222222;box-shadow:0 0 0 0.7px #474747"></div>
<svg class="a" style="left:672.1px;top:281.99px" width="5" height="5" viewBox="0 0 5 5"><path d="M4.5 0.3 L0.6 2.5 L4.5 4.7 Z" fill="#dedede"/></svg>
<svg class="a" style="left:821.5px;top:281.99px" width="5" height="5" viewBox="0 0 5 5"><path d="M0.5 0.3 L4.4 2.5 L0.5 4.7 Z" fill="#555"/></svg>
<div class="a wl" style="left:678.1px;top:280.49px">ckpt_name</div>
<div class="a wv" style="right:465.5px;top:280.49px">ltx-2.3-22b-dev-nvfp4.safetensors</div>
<div class="a" style="left:669.1px;top:291.12px;width:160.4px;height:8px;border-radius:4.0px;background:#222222;box-shadow:0 0 0 0.7px #474747"></div>
<svg class="a" style="left:672.1px;top:292.62px" width="5" height="5" viewBox="0 0 5 5"><path d="M4.5 0.3 L0.6 2.5 L4.5 4.7 Z" fill="#777"/></svg>
<svg class="a" style="left:821.5px;top:292.62px" width="5" height="5" viewBox="0 0 5 5"><path d="M0.5 0.3 L4.4 2.5 L0.5 4.7 Z" fill="#dedede"/></svg>
<div class="a wl" style="left:678.1px;top:291.12px">distille…</div>
<div class="a wv" style="right:465.5px;top:291.12px">ltx-2.3-22b-distilled-lora-384-1.1.safetensors</div>
<div class="a" style="left:669.1px;top:301.75px;width:160.4px;height:8px;border-radius:4.0px;background:#222222;box-shadow:0 0 0 0.7px #474747"></div>
<svg class="a" style="left:672.1px;top:303.25px" width="5" height="5" viewBox="0 0 5 5"><path d="M4.5 0.3 L0.6 2.5 L4.5 4.7 Z" fill="#dedede"/></svg>
<svg class="a" style="left:821.5px;top:303.25px" width="5" height="5" viewBox="0 0 5 5"><path d="M0.5 0.3 L4.4 2.5 L0.5 4.7 Z" fill="#555"/></svg>
<div class="a wl" style="left:678.1px;top:301.75px">text_encoder</div>
<div class="a wv" style="right:465.5px;top:301.75px"><span style="letter-spacing:-0.26px">gemma_3_12B_it_fp4_mixed.safetensors</span></div>
<div class="a" style="left:669.1px;top:312.38px;width:160.4px;height:8px;border-radius:4.0px;background:#222222;box-shadow:0 0 0 0.7px #474747"></div>
<svg class="a" style="left:672.1px;top:313.88px" width="5" height="5" viewBox="0 0 5 5"><path d="M4.5 0.3 L0.6 2.5 L4.5 4.7 Z" fill="#777"/></svg>
<svg class="a" style="left:821.5px;top:313.88px" width="5" height="5" viewBox="0 0 5 5"><path d="M0.5 0.3 L4.4 2.5 L0.5 4.7 Z" fill="#555"/></svg>
<div class="a wl" style="left:678.1px;top:312.38px">latent_up…</div>
<div class="a wv" style="right:465.5px;top:312.38px">ltx-2.3-spatial-upscaler-x2-1.1.safetensors</div>
<div class="a" style="left:669.1px;top:323.01px;width:160.4px;height:8px;border-radius:4.0px;background:#222222;box-shadow:0 0 0 0.7px #474747"></div>
<svg class="a" style="left:672.1px;top:324.51px" width="5" height="5" viewBox="0 0 5 5"><path d="M4.5 0.3 L0.6 2.5 L4.5 4.7 Z" fill="#dedede"/></svg>
<svg class="a" style="left:821.5px;top:324.51px" width="5" height="5" viewBox="0 0 5 5"><path d="M0.5 0.3 L4.4 2.5 L0.5 4.7 Z" fill="#dedede"/></svg>
<div class="a wl" style="left:678.1px;top:323.01px">fps</div>
<div class="a wv" style="right:465.5px;top:323.01px">25</div>
<div class="a" style="left:669.1px;top:333.64px;width:160.4px;height:8px;border-radius:4.0px;background:#222222;box-shadow:0 0 0 0.7px #474747"></div>
<svg class="a" style="left:672.1px;top:335.14px" width="5" height="5" viewBox="0 0 5 5"><path d="M4.5 0.3 L0.6 2.5 L4.5 4.7 Z" fill="#dedede"/></svg>
<svg class="a" style="left:821.5px;top:335.14px" width="5" height="5" viewBox="0 0 5 5"><path d="M0.5 0.3 L4.4 2.5 L0.5 4.7 Z" fill="#555"/></svg>
<div class="a wl" style="left:678.1px;top:333.64px">生成後の制御</div>
<div class="a wv" style="right:465.5px;top:333.64px">randomize</div>
<div class="a" style="left:669.1px;top:344.27px;width:160.4px;height:8px;border-radius:4.0px;background:#222222;box-shadow:0 0 0 0.7px #474747"></div>
<svg class="a" style="left:672.1px;top:345.77px" width="5" height="5" viewBox="0 0 5 5"><path d="M4.5 0.3 L0.6 2.5 L4.5 4.7 Z" fill="#dedede"/></svg>
<svg class="a" style="left:821.5px;top:345.77px" width="5" height="5" viewBox="0 0 5 5"><path d="M0.5 0.3 L4.4 2.5 L0.5 4.7 Z" fill="#dedede"/></svg>
<div class="a wl" style="left:678.1px;top:344.27px">ノイズシード</div>
<div class="a wv" style="right:465.5px;top:344.27px">1014984522090626</div>
<div class="a" style="left:850px;top:132.3px;width:299px;height:226.7px;border-radius:4px;background:#373737;box-shadow:0 0 5px 2px rgba(0,0,0,.45)"></div>
<div class="a" style="left:850px;top:132.3px;width:299px;height:13px;border-radius:4px 4px 0 0;background:#323232"></div>
<div class="a" style="left:850px;top:145.3px;width:299px;height:0.7px;background:#282828"></div>
<div class="a" style="left:854.5px;top:136.6px;width:4.5px;height:4.5px;border-radius:50%;background:#5c5c5c"></div>
<div class="a ntitle" style="left:863px;top:133px">ビデオを保存</div>
<div class="a" style="left:852.1px;top:149.5px;width:4.2px;height:4.2px;border-radius:50%;background:#6fe06f;box-shadow:0 0 0 1px rgba(0,0,0,.6)"></div>
<div class="a wl" style="left:859.5px;top:147.6px;color:#a8a8a8">ビデオ</div>
<div class="a" style="left:857px;top:157.6px;width:286px;height:8px;border-radius:4.0px;background:#222222;box-shadow:0 0 0 0.7px #474747"></div>
<div class="a wl" style="left:863.5px;top:157.6px">ファイル名プレフィックス</div>
<div class="a wv" style="right:144px;top:157.6px">video/LTX_2.3_i2v</div>
<div class="a" style="left:857px;top:168.1px;width:286px;height:8px;border-radius:4.0px;background:#222222;box-shadow:0 0 0 0.7px #474747"></div>
<svg class="a" style="left:860px;top:169.6px" width="5" height="5" viewBox="0 0 5 5"><path d="M4.5 0.3 L0.6 2.5 L4.5 4.7 Z" fill="#777"/></svg>
<svg class="a" style="left:1135px;top:169.6px" width="5" height="5" viewBox="0 0 5 5"><path d="M0.5 0.3 L4.4 2.5 L0.5 4.7 Z" fill="#dedede"/></svg>
<div class="a wl" style="left:866px;top:168.1px">フォーマット</div>
<div class="a wv" style="right:152px;top:168.1px">auto</div>
<div class="a" style="left:857px;top:178.7px;width:286px;height:8px;border-radius:4.0px;background:#222222;box-shadow:0 0 0 0.7px #474747"></div>
<svg class="a" style="left:860px;top:180.2px" width="5" height="5" viewBox="0 0 5 5"><path d="M4.5 0.3 L0.6 2.5 L4.5 4.7 Z" fill="#777"/></svg>
<svg class="a" style="left:1135px;top:180.2px" width="5" height="5" viewBox="0 0 5 5"><path d="M0.5 0.3 L4.4 2.5 L0.5 4.7 Z" fill="#dedede"/></svg>
<div class="a wl" style="left:866px;top:178.7px">コーデック</div>
<div class="a wv" style="right:152px;top:178.7px">auto</div>
<div class="a" style="left:854.4px;top:194.8px;width:290.6px;height:160px;overflow:hidden;background:#111"><svg width="100%" height="100%" viewBox="0 0 291 148" preserveAspectRatio="none" style="display:block">
<defs>
<linearGradient id="skyi2" x1="0" y1="0" x2="0.25" y2="1"><stop offset="0" stop-color="#687e8e"/><stop offset="0.5" stop-color="#7a8d9b"/><stop offset="1" stop-color="#909ea7"/></linearGradient>
<linearGradient id="sandi2" x1="0" y1="0" x2="1" y2="0.3"><stop offset="0" stop-color="#b47b55"/><stop offset="1" stop-color="#c48d60"/></linearGradient>
<radialGradient id="ski2" cx="0.4" cy="0.35" r="0.65"><stop offset="0" stop-color="#f6f2ee"/><stop offset="0.6" stop-color="#ddd5ce"/><stop offset="1" stop-color="#9a918a"/></radialGradient>
<filter id="bli2" x="-5%" y="-5%" width="110%" height="110%"><feGaussianBlur stdDeviation="0.7"/></filter>
</defs>
<rect width="291" height="148" fill="url(#skyi2)"/>
<g filter="url(#bli2)">
<!-- left stepped pyramid -->
<path d="M-2 17 L1 17.7 L12.5 36.5 L12.5 39 L31.7 39 L45.7 64 L60 64 L70 79 L78 79 L98.4 129 L98.4 148 L-2 148 Z" fill="#8c4d32"/>
<path d="M-2 17 L1 17.7 L12.5 36.5 L12.5 39 L0 39 L-2 36 Z" fill="#dcbc9c"/>
<path d="M18 39 L31.7 39 L58 104 L46 108 Z" fill="#d3ab88"/>
<path d="M52 64 L60 64 L86 118 L78 119 Z" fill="#cfa583"/>
<path d="M72 79 L78 79 L98.4 127 L93 129 Z" fill="#cfa583"/>
<path d="M0 40 L14 40 L40 100 L0 100 Z" fill="#98583a" opacity=".7"/>
<!-- right tower -->
<path d="M237 62 L247 62 L257 86 L226 86 Z" fill="#c9a98b"/>
<path d="M212 84 L267 84 L264 89 L215 89 Z" fill="#c49d78"/>
<rect x="216" y="89" width="46" height="32" fill="#a27a5e"/>
<!-- left skulls -->
<path d="M0 96 L40 104 L100 122 L118 132 L118 148 L0 148 Z" fill="#9a928c"/>
<g fill="url(#ski2)">
<ellipse cx="5" cy="99" rx="9" ry="11"/><ellipse cx="19" cy="109" rx="8" ry="9"/><ellipse cx="37" cy="111" rx="9" ry="9"/>
<ellipse cx="57" cy="117" rx="7" ry="7.5"/><ellipse cx="72" cy="120" rx="6" ry="6.5"/><ellipse cx="84" cy="123" rx="5.5" ry="6"/><ellipse cx="96" cy="127" rx="5" ry="5"/><ellipse cx="106" cy="131" rx="4" ry="4"/>
<ellipse cx="7" cy="129" rx="9" ry="11"/><ellipse cx="27" cy="130" rx="8" ry="10"/><ellipse cx="44" cy="133" rx="7" ry="9"/><ellipse cx="59" cy="135" rx="6.5" ry="8.5"/><ellipse cx="73" cy="137" rx="6" ry="8"/><ellipse cx="86" cy="138" rx="5.5" ry="7.5"/><ellipse cx="98" cy="139" rx="5" ry="7"/><ellipse cx="110" cy="140" rx="4.5" ry="6.5"/>
</g>
<g fill="#4e4038">
<ellipse cx="6" cy="103" rx="4" ry="3"/><ellipse cx="19" cy="112" rx="3.5" ry="2.8"/><ellipse cx="37" cy="114" rx="4" ry="3"/><ellipse cx="57" cy="119.5" rx="3" ry="2.4"/><ellipse cx="72" cy="122.5" rx="2.6" ry="2"/><ellipse cx="84" cy="125" rx="2.3" ry="1.8"/>
<ellipse cx="7" cy="132" rx="3.5" ry="3"/><ellipse cx="27" cy="133" rx="3.2" ry="2.6"/><ellipse cx="44" cy="135.5" rx="2.5" ry="2.2"/><ellipse cx="59" cy="137" rx="2.2" ry="2"/><ellipse cx="73" cy="139" rx="2" ry="1.8"/>
</g>
<!-- right skulls -->
<path d="M196 120 L240 108 L291 94 L291 148 L196 148 Z" fill="#6a625c"/>
<path d="M196 134 L291 128 L291 148 L196 148 Z" fill="#3f3a37"/>
<g fill="url(#ski2)">
<ellipse cx="205" cy="126" rx="5" ry="5"/><ellipse cx="216" cy="123" rx="6" ry="6"/><ellipse cx="233" cy="118" rx="7" ry="7"/><ellipse cx="250" cy="116" rx="8.5" ry="8.5"/><ellipse cx="270" cy="107" rx="10" ry="10"/><ellipse cx="287" cy="100" rx="8" ry="11"/>
<ellipse cx="212" cy="137" rx="5" ry="5"/><ellipse cx="226" cy="135" rx="5.5" ry="5.5"/>
</g>
<g fill="#4e4038"><ellipse cx="233" cy="121" rx="3" ry="2.5"/><ellipse cx="250" cy="119" rx="3.6" ry="3"/><ellipse cx="271" cy="111" rx="4.5" ry="3.5"/><ellipse cx="287" cy="104" rx="3.5" ry="3"/><ellipse cx="216" cy="125" rx="2.5" ry="2"/></g>
<!-- dress -->
<path d="M106 101 L132 96 L150 88 L170 88 L190 97 L213 105 L205 148 L116 148 Z" fill="#d8cfc5"/>
<path d="M106 101 L119 106 L126 148 L114 148 Z" fill="#b27b55"/>
<path d="M193 110 L213 105 L205 148 L190 148 Z" fill="#b47c54"/>
<path d="M106 101 L132 96 L136 101 L120 106 Z" fill="#eae6e2"/>
<path d="M190 97 L213 105 L204 109 L188 102 Z" fill="#eae6e2"/>
<path d="M138 96 L150 86 L170 86 L186 98 L168 116 L160 117 L148 112 Z" fill="#a68c6c"/>
<rect x="157" y="112" width="7" height="36" fill="#a99072"/>
<!-- neck/face -->
<path d="M146 78 L168 76 L170 92 L147 94 Z" fill="#a88564"/>
<path d="M131 58 L170 60 L167 78 L160 88 L148 89 L136 82 L131 70 Z" fill="#b98058"/>
<path d="M150 62 L168 62 L166 80 L158 86 Z" fill="#cf9a70" opacity=".6"/>
<path d="M134 65 L164 65 L163 69 L135 69 Z" fill="#4a3224" opacity=".55"/>
<!-- crown -->
<path d="M135 8 L150 4 L178 12.5 L183 25 L175 58 L170 67 L126 61 L120 51 L129 43 Z" fill="#2c4465"/>
<path d="M152 14 L174 20 L170 50 L150 46 Z" fill="#38557a" opacity=".8"/>
<path d="M141 3.5 L148 3.5 L148 8 L158 8.5 L158 12 L148 12 L147 46 L142 46 L141 12 L134 12 L134 8.5 L141 8 Z" fill="#c3a272"/>
<path d="M141 44 Q150 54 162 49 Q174 42 179 21 L184 23 Q180 48 166 55 Q150 62 138 50 Z" fill="#bf9f6e"/>
<path d="M177 14 L184 16 L186 27 L180 30 Z" fill="#c6a676"/>
<path d="M121 50 L128 48.5 L172 61 L171 66.5 L127 62 Z" fill="#a98a5e"/>
</g>
</svg>
<div class="a" style="left:0;top:126px;width:291px;height:24px;background:linear-gradient(to bottom,rgba(0,0,0,0),rgba(0,0,0,.35) 70%,rgba(0,0,0,.6))"></div>
<div class="a" style="left:0;top:148px;width:291px;height:12px;background:#0b0b0b"></div>
<svg class="a" style="left:9px;top:135.5px" width="6" height="7" viewBox="0 0 6 7"><path d="M0.5 0.3 L5.6 3.5 L0.5 6.7 Z" fill="#fff"/></svg>
<div class="a" style="left:21.5px;top:134px;font-size:7.2px;line-height:8px;color:#f6f6f6;transform:scaleX(0.86);transform-origin:0 0">0:00 / 0:04</div>
<svg class="a" style="left:233px;top:135px" width="8" height="8" viewBox="0 0 8 8"><path d="M0.5 2.7 H2 L4.3 0.6 V7.4 L2 5.3 H0.5 Z" fill="#fff"/><path d="M5.4 2.4 Q6.6 4 5.4 5.6 M6.3 1.3 Q8.2 4 6.3 6.7" stroke="#fff" stroke-width="0.7" fill="none"/></svg>
<svg class="a" style="left:254px;top:135.5px" width="7" height="7" viewBox="0 0 7 7"><path d="M0.5 2.3 V0.5 H2.3 M4.7 0.5 H6.5 V2.3 M6.5 4.7 V6.5 H4.7 M2.3 6.5 H0.5 V4.7" stroke="#fff" stroke-width="0.8" fill="none"/></svg>
<div class="a" style="left:278.8px;top:136px;width:1.4px;height:1.4px;background:#fff;border-radius:50%;box-shadow:0 2.3px #fff,0 4.6px #fff"></div>
<div class="a" style="left:6.6px;top:150.3px;width:276.5px;height:1.6px;border-radius:1px;background:#5a5a5a"></div>
<div class="a" style="left:6.6px;top:150.3px;width:188.5px;height:1.6px;border-radius:1px;background:#e6e6e6"></div>
</div>
<svg class="a" style="left:0;top:0" width="1280" height="720"><path d="M638 151.5 H663" stroke="#6cb6f2" stroke-width="1.6"/><circle cx="651" cy="151.5" r="2.4" fill="#7cc0f6"/><path d="M836 151.5 H851" stroke="#d0e0d0" stroke-width="1.6"/><circle cx="843.5" cy="151.5" r="2.4" fill="#d8e6d8"/></svg><!-- minimap -->
<div class="a" style="left:1120px;top:560.5px;width:157px;height:124px;border-radius:7px;background:#141415;border:1px solid #232325"></div>
<svg class="a" style="left:1125px;top:565px" width="10" height="10" viewBox="0 0 10 10"><path d="M0.5 2.8 H9.5 M0.5 7.2 H9.5" stroke="#aaa" stroke-width="0.9"/><circle cx="3.3" cy="2.8" r="1.4" fill="#141415" stroke="#aaa" stroke-width="0.9"/><circle cx="6.7" cy="7.2" r="1.4" fill="#141415" stroke="#aaa" stroke-width="0.9"/></svg>
<svg class="a" style="left:1264px;top:566px" width="8" height="8" viewBox="0 0 8 8"><path d="M0.6 0.6 L7.4 7.4 M7.4 0.6 L0.6 7.4" stroke="#bdbdbd" stroke-width="0.9"/></svg>
<div class="a" style="left:1120.5px;top:578.6px;width:156.5px;height:83px;background:#474747;border-top:1.3px solid #d0d0d0;border-bottom:1.3px solid #d0d0d0"></div>
<div class="a" style="left:1133.2px;top:589.3px;width:42.3px;height:66px;background:#3e7cae"></div>
<div class="a" style="left:1177px;top:589.3px;width:23.3px;height:26.7px;background:#3e7cae"></div>
<div class="a" style="left:1203px;top:589.3px;width:22px;height:26.7px;background:#3e7cae"></div>
<div class="a" style="left:1227px;top:589.3px;width:37.6px;height:26.7px;background:#3e7cae"></div>
<!-- bottom toolbar -->
<div class="a" style="left:1120px;top:687.2px;width:157px;height:30.6px;border-radius:7px;background:#141415;border:1px solid #232325"></div>
<div class="a" style="left:1125.3px;top:693.2px;width:19.5px;height:19.3px;border-radius:4px;background:#2e2e30"></div>
<svg class="a" style="left:1130px;top:698px" width="10" height="10" viewBox="0 0 10 10"><path d="M1 1 L9 4 L5.2 5.2 L4 9 Z" stroke="#eee" stroke-width="0.9" fill="none" stroke-linejoin="round"/></svg>
<svg class="a" style="left:1149.5px;top:701px" width="6" height="4" viewBox="0 0 6 4"><path d="M0.8 0.8 L3 3 L5.2 0.8" stroke="#ddd" stroke-width="0.9" fill="none"/></svg>
<div class="a" style="left:1161px;top:695px;width:1px;height:16px;background:#262628"></div>
<svg class="a" style="left:1169.5px;top:698px" width="10" height="10" viewBox="0 0 10 10"><path d="M0.6 3 V1.5 Q0.6 0.6 1.5 0.6 H3 M7 0.6 H8.5 Q9.4 0.6 9.4 1.5 V3 M9.4 7 V8.5 Q9.4 9.4 8.5 9.4 H7 M3 9.4 H1.5 Q0.6 9.4 0.6 8.5 V7" stroke="#ddd" stroke-width="0.9" fill="none"/><circle cx="5" cy="5" r="1.2" stroke="#ddd" stroke-width="0.8" fill="none"/></svg>
<div class="a" style="left:1191.5px;top:699px;font-size:8px;line-height:10px;font-weight:bold;color:#eee">71%</div>
<svg class="a" style="left:1211.5px;top:701px" width="6" height="4" viewBox="0 0 6 4"><path d="M0.8 0.8 L3 3 L5.2 0.8" stroke="#ddd" stroke-width="0.9" fill="none"/></svg>
<div class="a" style="left:1227px;top:695px;width:1px;height:16px;background:#262628"></div>
<div class="a" style="left:1230.2px;top:693.2px;width:19.5px;height:19.3px;border-radius:4px;background:#2e2e30"></div>
<svg class="a" style="left:1235px;top:698px" width="10" height="10" viewBox="0 0 10 10"><path d="M0.8 1.8 L3.4 0.8 L6.6 1.8 L9.2 0.8 V8.2 L6.6 9.2 L3.4 8.2 L0.8 9.2 Z M3.4 0.8 V8.2 M6.6 1.8 V9.2" stroke="#eee" stroke-width="0.9" fill="none" stroke-linejoin="round"/></svg>
<svg class="a" style="left:1258px;top:698px" width="10" height="10" viewBox="0 0 10 10"><circle cx="2" cy="8" r="1.3" stroke="#ddd" stroke-width="0.9" fill="none"/><circle cx="8" cy="2" r="1.3" stroke="#ddd" stroke-width="0.9" fill="none"/><path d="M3 7 Q5 5 7 3 M0.5 0.5 L9.5 9.5" stroke="#ddd" stroke-width="0.9" fill="none"/></svg>
</body></html>
